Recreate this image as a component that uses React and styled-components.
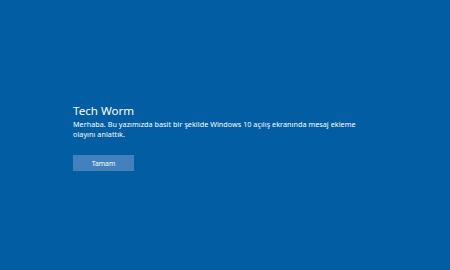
import React from 'react';
import styled, { createGlobalStyle } from 'styled-components';

const GlobalStyle = createGlobalStyle`
	html, body {
		margin: 0;
		padding: 0;
	}
	body {
		font-family: "Noto Sans", "Open Sans", sans-serif;
	}
`

const App = () => {
	return (
		<>
		<GlobalStyle />
		<Screen>
			<Dialog>
				<Title>Tech Worm</Title>
				<Message>Merhaba. Bu yazımızda basit bir şekilde Windows 10 açılış ekranında mesaj ekleme olayını anlattık.</Message>
				<Button>Tamam</Button>
			</Dialog>
		</Screen>
		</>
	)
}

const Screen = styled.div`
	width: 450px;
	height: 270px;
	background: #035da2;
	display: flex;
	flex-direction: column;
	box-sizing: border-box;
	padding: 102px 0 0 73px;
	overflow: hidden;
`
const Dialog = styled.div`
	display: flex;
	flex-direction: column;
	align-items: flex-start;
	width: 288px;
`
const Title = styled.p`
	margin: 0;
	font-size: 11.6px;
	line-height: 17px;
	color: #fff;
	font-weight: 400;
`
const Message = styled.p`
	margin: 0;
	font-size: 7.2px;
	line-height: 10px;
	color: #fff;
	letter-spacing: 0.05px;
`
const Button = styled.button`
	margin-top: 16px;
	width: 61px;
	height: 16px;
	border: none;
	padding: 0;
	background: #4281bb;
	color: #fff;
	font-family: inherit;
	font-size: 6.8px;
	cursor: pointer;
`
export default App
